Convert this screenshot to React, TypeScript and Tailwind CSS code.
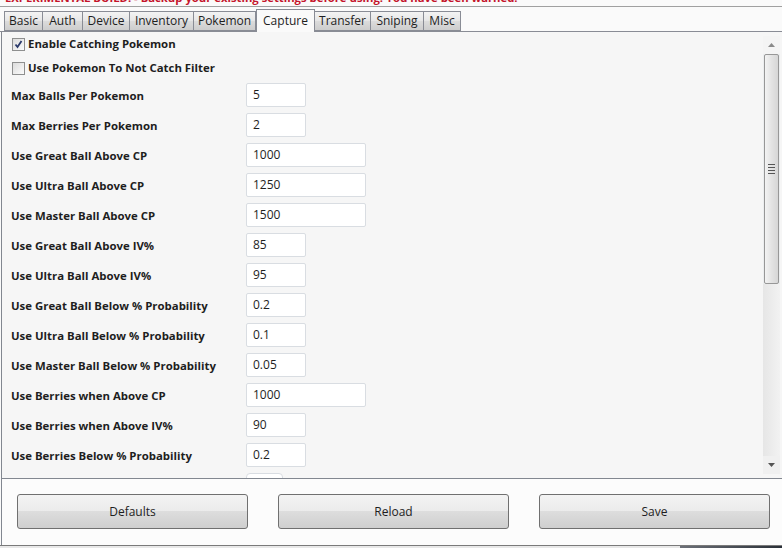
import React from 'react';

const tabs = ['Basic', 'Auth', 'Device', 'Inventory', 'Pokemon', 'Capture', 'Transfer', 'Sniping', 'Misc'];
const tabWidths = [39, 40, 47, 64, 62, 59, 56, 53, 37];

const rows: { label: string; value: string; wide?: boolean }[] = [
  { label: 'Max Balls Per Pokemon', value: '5' },
  { label: 'Max Berries Per Pokemon', value: '2' },
  { label: 'Use Great Ball Above CP', value: '1000', wide: true },
  { label: 'Use Ultra Ball Above CP', value: '1250', wide: true },
  { label: 'Use Master Ball Above CP', value: '1500', wide: true },
  { label: 'Use Great Ball Above IV%', value: '85' },
  { label: 'Use Ultra Ball Above IV%', value: '95' },
  { label: 'Use Great Ball Below % Probability', value: '0.2' },
  { label: 'Use Ultra Ball Below % Probability', value: '0.1' },
  { label: 'Use Master Ball Below % Probability', value: '0.05' },
  { label: 'Use Berries when Above CP', value: '1000', wide: true },
  { label: 'Use Berries when Above IV%', value: '90' },
  { label: 'Use Berries Below % Probability', value: '0.2' },
];

const Checkbox = ({ checked, label }: { checked?: boolean; label: string }) => (
  <div className="h-[24px] flex items-center pl-[10px]">
    <div className="w-[13px] h-[13px] border border-[#8e8f8f] bg-gradient-to-br from-[#dcdcdc] to-[#fbfbfb] flex items-center justify-center">
      {checked && (
        <svg width="9" height="9" viewBox="0 0 9 9">
          <path d="M1.5 4.5 L3.5 7 L7.5 1" stroke="#2b3a6b" strokeWidth="1.8" fill="none" />
        </svg>
      )}
    </div>
    <span className="ml-[3px] font-bold text-[11.4px] text-[#1e1e1e]">{label}</span>
  </div>
);

const Button = ({ label }: { label: string }) => (
  <button className="w-[231px] h-[35px] rounded-[3px] border border-[#707070] bg-[linear-gradient(#f3f3f3_0%,#ebebeb_50%,#dddddd_50%,#cfcfcf_100%)] text-[12px] text-[#1e1e1e]">
    {label}
  </button>
);

export default function App() {
  return (
    <div
      className="w-[782px] h-[548px] overflow-hidden relative bg-[#fafafa] flex flex-col"
      style={{ fontFamily: '"Open Sans", "Noto Sans", sans-serif' }}
    >
      {/* warning strip, top part scrolled out of view */}
      <div className="h-[6px] overflow-hidden shrink-0">
        <div className="-mt-[10px] pl-[5px] text-[11.3px] font-bold text-[#c4142b] whitespace-nowrap leading-[16px]">
          EXPERIMENTAL BUILD! - Backup your existing settings before using! You have been warned!
        </div>
      </div>
      <div className="h-px bg-[#a0a0a0] shrink-0" />

      {/* tab strip */}
      <div className="h-[25px] flex items-end pl-[4px] shrink-0 border-b border-[#898c95]">
        {tabs.map((t, i) =>
          t === 'Capture' ? (
            <div
              key={t}
              style={{ width: tabWidths[i] }}
              className="h-[23px] -mb-px bg-[#fafafa] border border-b-0 border-[#898c95] flex items-center justify-center text-[12px] text-[#1e1e1e] relative z-10"
            >
              {t}
            </div>
          ) : (
            <div
              key={t}
              style={{ width: tabWidths[i] }}
              className="h-[20px] bg-[linear-gradient(#f3f3f3,#e6e6e6_50%,#dcdcdc_50%,#cdcdcd)] border border-l-0 first:border-l border-[#898c95] flex items-center justify-center text-[12px] text-[#1e1e1e]"
            >
              {t}
            </div>
          )
        )}
      </div>

      {/* panel */}
      <div className="h-[446px] flex shrink-0 bg-[#f6f6f6] border-l border-[#828790] ml-px">
        <div className="flex-1 overflow-hidden">
          <Checkbox checked label="Enable Catching Pokemon" />
          <Checkbox label="Use Pokemon To Not Catch Filter" />
          {rows.map((r) => (
            <div key={r.label} className="h-[30px] flex items-center">
              <div className="w-[244px] pl-[9px] pt-[2px] font-bold text-[11.4px] text-[#1e1e1e]">{r.label}</div>
              <div
                className={`${r.wide ? 'w-[120px]' : 'w-[60px]'} h-[24px] bg-white border border-[#d9dde2] rounded-[2px] flex items-center pl-[6px] text-[12px] text-[#1e1e1e]`}
              >
                {r.value}
              </div>
            </div>
          ))}
          <div className="h-[30px] flex items-center">
            <div className="w-[244px]" />
            <div className="w-[37px] h-[24px] bg-white border border-[#d9dde2] rounded-[4px]" />
          </div>
        </div>

        {/* scrollbar */}
        <div className="w-[17px] mr-[2px] mt-[4px] mb-[4px] flex flex-col bg-[#eceeef]">
          <div className="h-[18px] flex items-center justify-center bg-[#f4f4f4]">
            <svg width="7" height="4" viewBox="0 0 7 4">
              <path d="M0 4 L3.5 0 L7 4 Z" fill="#8a8a8a" />
            </svg>
          </div>
          <div className="h-[230px] mx-px border border-[#979797] rounded-[2px] bg-[linear-gradient(90deg,#f3f3f3,#e3e3e3_50%,#d6d6d6)] flex items-center justify-center">
            <div className="flex flex-col gap-[2px]">
              <div className="w-[7px] h-px bg-[#555]" />
              <div className="w-[7px] h-px bg-[#555]" />
              <div className="w-[7px] h-px bg-[#555]" />
              <div className="w-[7px] h-px bg-[#555]" />
            </div>
          </div>
          <div className="flex-1 bg-[linear-gradient(90deg,#e6e6e6,#f2f2f2)]" />
          <div className="h-[18px] flex items-center justify-center bg-[#f0f0f0]">
            <svg width="7" height="4" viewBox="0 0 7 4">
              <path d="M0 0 L3.5 4 L7 0 Z" fill="#555" />
            </svg>
          </div>
        </div>
      </div>

      {/* bottom bar */}
      <div className="flex-1 flex flex-col bg-[#fcfcfc] border-t border-l border-[#828790] ml-px">
        <div className="flex gap-[30px] pl-[15px] pt-[15px]">
          <Button label="Defaults" />
          <Button label="Reload" />
          <Button label="Save" />
        </div>
      </div>
      <div className="h-px bg-[#7a7a7a] shrink-0" />
      <div className="h-[2px] shrink-0 flex">
        <div className="w-[680px] bg-[#e8e8e8]" />
        <div className="flex-1 bg-[linear-gradient(90deg,#6c7078,#2a3038)]" />
      </div>
    </div>
  );
}
